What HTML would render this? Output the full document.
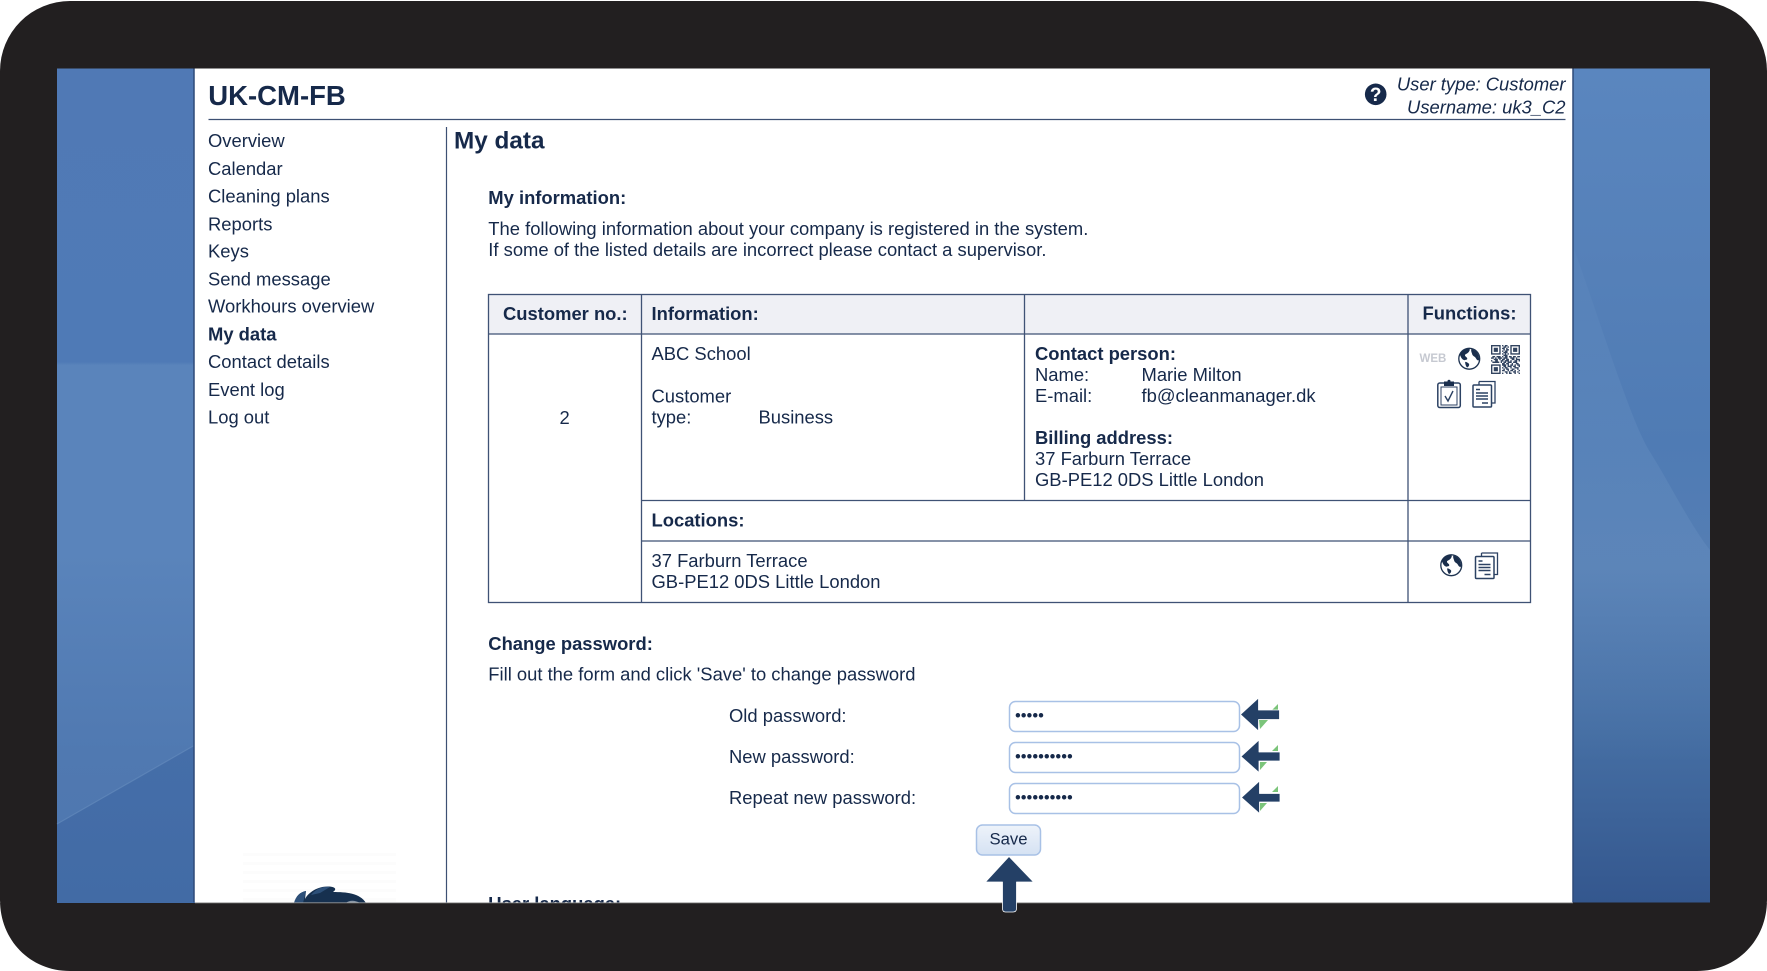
<!DOCTYPE html>
<html lang="en"><head><meta charset="utf-8"><title>My data</title>
<style>
html,body{margin:0;padding:0;background:#fff;width:1767px;height:971px;overflow:hidden}
svg{display:block}
text{font-family:"Liberation Sans",Arial,sans-serif;font-size:18.4px;fill:#16294a}
.b{font-weight:700}
.i{font-style:italic;text-anchor:end}
</style></head><body>
<svg width="1767" height="971" viewBox="0 0 1767 971" xmlns="http://www.w3.org/2000/svg">
<defs>
<linearGradient id="lb" gradientUnits="userSpaceOnUse" x1="0" y1="68" x2="0" y2="903">
<stop offset="0" stop-color="#5079b5"/><stop offset=".352" stop-color="#4f7ab6"/><stop offset=".356" stop-color="#5a84bb"/><stop offset=".58" stop-color="#5a84bb"/><stop offset=".82" stop-color="#5079b1"/><stop offset="1" stop-color="#4e76ae"/>
</linearGradient>
<linearGradient id="ld" gradientUnits="userSpaceOnUse" x1="0" y1="745" x2="0" y2="903">
<stop offset="0" stop-color="#456ea9"/><stop offset="1" stop-color="#426ba5"/>
</linearGradient>
<linearGradient id="rb" x1="0" y1="0" x2="0" y2="1">
<stop offset="0" stop-color="#5a86bf"/><stop offset=".25" stop-color="#5580b8"/><stop offset=".45" stop-color="#4f7bb4"/><stop offset=".6" stop-color="#557eb3"/><stop offset=".8" stop-color="#456ea3"/><stop offset="1" stop-color="#34578e"/>
</linearGradient>
<linearGradient id="btn" x1="0" y1="0" x2="0" y2="1"><stop offset="0" stop-color="#eef3fa"/><stop offset="1" stop-color="#d5e2f3"/></linearGradient>
<linearGradient id="rc" gradientUnits="userSpaceOnUse" x1="0" y1="250" x2="0" y2="760"><stop offset="0" stop-color="#6e96c6" stop-opacity=".12"/><stop offset=".35" stop-color="#6e96c6" stop-opacity=".28"/><stop offset=".6" stop-color="#6e96c6" stop-opacity=".3"/><stop offset="1" stop-color="#6e96c6" stop-opacity="0"/></linearGradient>
<symbol id="globe" viewBox="0 0 22 22">
<circle cx="11" cy="11" r="10.2" fill="#fff" stroke="#1e3350" stroke-width="1.3"/>
<path d="M11 1C7 1 3.5 3.5 1.8 7c1.2 2.8 2 4.8 4.5 5.5 1.4-.8 3.5-.2 2.5-2.5-1-1.3-2.5-1.5-1.8-3.2C8.400 6 10 5.500 11 3.500c.8-1 .5-1.800 0-2.500z" fill="#1a2e4c"/>
<path d="M13 1.500c-.5 2 .5 3.500 1 5.500 1 1.800 2.500 1.800 3.500 3.500.8 1.500 1.500 2.500 3 2 .6-4.500-1.500-9.500-7.500-11z" fill="#1a2e4c"/>
<path d="M7 14c1.500 0 2.800.8 3.800 2 .5 1.500-.5 3-2 3.500C7.500 18 7 16 7 14z" fill="#1a2e4c"/>
</symbol>
<symbol id="docs" viewBox="0 0 24 28">
<path d="M7 1.500h16v21.500h-3" fill="#fff" stroke="#2c4263" stroke-width="1.300"/>
<path d="M7 1.500v3" fill="none" stroke="#2c4263" stroke-width="1.300"/>
<rect x="1" y="5" width="18.500" height="22" rx="1" fill="#fff" stroke="#2c4263" stroke-width="1.500"/>
<path d="M4 9.500h4M4 13h12M4 16h12M4 19h12M10 23h6" fill="none" stroke="#2c4263" stroke-width="1.400"/>
</symbol>
</defs>

<rect x="0" y="1" width="1767" height="969.500" rx="70" ry="70" fill="#221f20"/>

<!-- blue strips -->
<rect x="57" y="68.500" width="138" height="834" fill="url(#lb)"/>
<path d="M57 824L195 745V903H57z" fill="url(#ld)"/>
<path d="M57 824L195 745" stroke="#6a8fc0" stroke-width="1.200" opacity=".55" fill="none"/>
<rect x="1573" y="68.500" width="137" height="834" fill="url(#rb)"/>
<path d="M1574 249C1600 320 1630 420 1650 452C1668 480 1690 525 1710 550V800H1574z" fill="url(#rc)"/>

<!-- panel -->
<rect x="194.500" y="68.500" width="1378.500" height="834" fill="#fff"/>
<path d="M194 68.500V902.500M1573 68.500V902.500" stroke="#2e4a78" stroke-width="1.500" fill="none"/>

<text class="b" x="208.300" y="105" style="font-size:27.500px">UK-CM-FB</text>
<path d="M208.500 119.500H1565.500" stroke="#3d5073" stroke-width="1.200"/>
<circle cx="1375.700" cy="94.300" r="10.800" fill="#16294a"/>
<text x="1375.700" y="101" text-anchor="middle" class="b" style="font-size:19px;fill:#fff">?</text>
<text class="i" x="1565.500" y="90.700">User type: Customer</text>
<text class="i" x="1565.500" y="113.300">Username: uk3_C2</text>

<!-- nav -->
<text x="208" y="147">Overview</text>
<text x="208" y="175">Calendar</text>
<text x="208" y="202.500">Cleaning plans</text>
<text x="208" y="230.300">Reports</text>
<text x="208" y="257.700">Keys</text>
<text x="208" y="285.500">Send message</text>
<text x="208" y="312.500">Workhours overview</text>
<text class="b" x="208" y="340.500">My data</text>
<text x="208" y="368">Contact details</text>
<text x="208" y="396">Event log</text>
<text x="208" y="423.500">Log out</text>
<path d="M446.500 127V902.500" stroke="#3d5073" stroke-width="1.200"/>

<!-- main -->
<text class="b" x="454" y="148.700" style="font-size:24.300px">My data</text>
<text class="b" x="488.300" y="204">My information:</text>
<text x="488.300" y="235">The following information about your company is registered in the system.</text>
<text x="488.300" y="256">If some of the listed details are incorrect please contact a supervisor.</text>

<!-- table -->
<rect x="488.500" y="294.500" width="1042" height="39.500" fill="#eff0f5"/>
<g stroke="#3f5275" stroke-width="1.300" fill="none">
<rect x="488.500" y="294.500" width="1042" height="308"/>
<path d="M488.500 334H1530.500M641.500 294.500V602.500M1024.500 294.500V500.500M1408 294.500V602.500M641.500 500.500H1530.500M641.500 541H1530.500"/>
</g>
<text class="b" x="503" y="320">Customer no.:</text>
<text class="b" x="651.500" y="320">Information:</text>
<text class="b" x="1422.500" y="319.500">Functions:</text>
<text x="559.500" y="424">2</text>
<text x="651.500" y="360">ABC School</text>
<text x="651.500" y="402.300">Customer</text>
<text x="651.500" y="423.300">type:</text>
<text x="758.500" y="423.300">Business</text>
<text class="b" x="1035" y="360">Contact person:</text>
<text x="1035" y="381">Name:</text>
<text x="1141.500" y="381">Marie Milton</text>
<text x="1035" y="402">E-mail:</text>
<text x="1141.500" y="402">fb@cleanmanager.dk</text>
<text class="b" x="1035" y="444">Billing address:</text>
<text x="1035" y="465">37 Farburn Terrace</text>
<text x="1035" y="486">GB-PE12 0DS Little London</text>
<text class="b" x="651.500" y="526.700">Locations:</text>
<text x="651.500" y="567">37 Farburn Terrace</text>
<text x="651.500" y="588">GB-PE12 0DS Little London</text>

<!-- function icons -->
<text x="1419.500" y="362" class="b" style="font-size:11.500px;fill:#c6c9d1">WEB</text>
<use href="#globe" x="1458" y="347.500" width="22.500" height="22.500"/>
<g transform="translate(1491 345) scale(1.380)" fill="none" stroke="#1b2f4e" stroke-width="1" opacity=".9">
<path d="M0 .5h7M8 .5h1M10 .5h2M14 .5h7M0 1.500h1M6 1.500h1M9 1.500h2M12 1.500h1M14 1.500h1M20 1.500h1M0 2.500h1M2 2.500h3M6 2.500h1M8 2.500h2M11 2.500h1M14 2.500h1M16 2.500h3M20 2.500h1M0 3.500h1M2 3.500h3M6 3.500h1M9 3.500h1M11 3.500h2M14 3.500h1M16 3.500h3M20 3.500h1M0 4.500h1M2 4.500h3M6 4.500h1M8 4.500h1M10 4.500h2M14 4.500h1M16 4.500h3M20 4.500h1M0 5.500h1M6 5.500h1M9 5.500h3M14 5.500h1M20 5.500h1M0 6.500h7M8 6.500h1M10 6.500h1M12 6.500h1M14 6.500h7M9 7.500h3M1 8.500h2M4 8.500h3M8 8.500h1M10 8.500h2M13 8.500h2M16 8.500h2M19 8.500h2M0 9.500h2M3 9.500h1M5 9.500h3M9 9.500h3M14 9.500h3M18 9.500h1M2 10.500h3M6 10.500h1M8 10.500h2M11 10.500h2M15 10.500h2M18 10.500h3M0 11.500h1M3 11.500h2M7 11.500h2M10 11.500h3M14 11.500h1M17 11.500h2M20 11.500h1M1 12.500h5M7 12.500h1M9 12.500h2M12 12.500h3M16 12.500h3M8 13.500h2M11 13.500h2M15 13.500h1M18 13.500h2M0 14.500h7M8 14.500h3M12 14.500h1M14 14.500h2M17 14.500h1M19 14.500h2M0 15.500h1M6 15.500h1M9 15.500h2M12 15.500h3M16 15.500h2M20 15.500h1M0 16.500h1M2 16.500h3M6 16.500h1M8 16.500h1M10 16.500h2M14 16.500h1M17 16.500h3M0 17.500h1M2 17.500h3M6 17.500h1M9 17.500h1M11 17.500h2M15 17.500h2M19 17.500h1M0 18.500h1M2 18.500h3M6 18.500h1M8 18.500h2M12 18.500h1M14 18.500h2M17 18.500h1M20 18.500h1M0 19.500h1M6 19.500h1M10 19.500h2M13 19.500h1M16 19.500h2M19 19.500h1M0 20.500h7M8 20.500h1M11 20.500h1M13 20.500h2M17 20.500h1M20 20.500h1"/>
</g>
<!-- clipboard -->
<rect x="1437.800" y="383" width="22.500" height="24.500" rx="2" fill="#fff" stroke="#2c4263" stroke-width="1.500"/>
<rect x="1441" y="387" width="16" height="18" fill="#fff" stroke="#2c4263" stroke-width="1"/>
<rect x="1444" y="381.500" width="10" height="4.500" fill="#1b2f4e"/>
<rect x="1447.500" y="379.800" width="3" height="3" rx="1.500" fill="#1b2f4e"/>
<path d="M1445 396l3 5 5-10" fill="none" stroke="#2c4263" stroke-width="1.400"/>
<use href="#docs" x="1472" y="380" width="24" height="28"/>
<use href="#globe" x="1440" y="554" width="22.500" height="22.500"/>
<use href="#docs" x="1474.500" y="551.500" width="24" height="28"/>

<!-- password -->
<text class="b" x="488.300" y="650">Change password:</text>
<text x="488.300" y="680.500">Fill out the form and click 'Save' to change password</text>
<text x="729" y="722">Old password:</text>
<text x="729" y="763">New password:</text>
<text x="729" y="804">Repeat new password:</text>
<g fill="#fff" stroke="#a8c1e6" stroke-width="1.500">
<rect x="1009.500" y="701.500" width="230" height="30" rx="6"/>
<rect x="1009.500" y="742.500" width="230" height="30" rx="6"/>
<rect x="1009.500" y="783.500" width="230" height="30" rx="6"/>
</g>
<text x="1015" y="721" style="font-size:16.500px">•••••</text>
<text x="1015" y="762" style="font-size:16.500px">••••••••••</text>
<text x="1015" y="803" style="font-size:16.500px">••••••••••</text>

<!-- arrows -->
<g fill="#7bc47a">
<path d="M1259 720h9l-8 9zM1272 710l6-6v6z"/>
<path d="M1260 762h7l-7 8zM1272 751l6-6v6z"/>
<path d="M1260 803h7l-7 8zM1272 792l6-6v6z"/>
</g>
<g fill="#244066" stroke="#fff" stroke-width=".8" stroke-linejoin="round">
<path d="M1240.500 714.500L1258.500 698v12h21v9.500h-21V731z"/>
<path d="M1241 756.500L1259 740v12h21v9h-21v11.500z"/>
<path d="M1241.500 797.500L1259.500 781v12.500h20.500v8.500h-20.500v11.500z"/>
</g>

<rect x="976.500" y="825" width="64" height="30" rx="6" fill="url(#btn)" stroke="#a8c1e6" stroke-width="1.500"/>
<text x="1008.500" y="844.700" text-anchor="middle" style="font-size:16.700px">Save</text>

<!-- logo fragment -->
<g fill="#fcfcfc"><rect x="243" y="853" width="153" height="3"/><rect x="243" y="862" width="153" height="3"/><rect x="243" y="871" width="153" height="3"/><rect x="243" y="880" width="153" height="3"/><rect x="243" y="889" width="153" height="3"/><rect x="243" y="898" width="153" height="4"/></g>
<path d="M294 903C296 896 300 892 306 891L305 899C308 893 317 886 329 886.500C337 887 336 890 333 892C346 892 360 893 366 903z" fill="#16304f"/>
<path d="M294 903C296 896 300 892 306 891L303 903zM311 895C316 889 322 886 330 887L320 893z" fill="#2d5079"/>
<path d="M346 903C349 900 355 900 360 903z" fill="#8b98a8"/>

<text class="b" x="488.300" y="910">User language:</text>

<!-- bottom bezel covers overflow -->
<path d="M0 903H1767V971H0z" fill="#221f20"/>
<path d="M195 902.800H1573" stroke="#9a9a9a" stroke-width=".8"/>
<path d="M0 900V971H70C30 971 0 940 0 900zM1767 900V971H1697C1737 971 1767 940 1767 900z" fill="#fff"/>

<!-- up arrow overlapping bezel -->
<path d="M1009 856.500L1033.500 882H1016.500V908.500Q1016.500 912 1013 912H1005.500Q1002.500 912 1002.500 908.500V882H985.500z" fill="#244066" stroke="#fff" stroke-width=".8" stroke-linejoin="round"/>
</svg>
</body></html>
